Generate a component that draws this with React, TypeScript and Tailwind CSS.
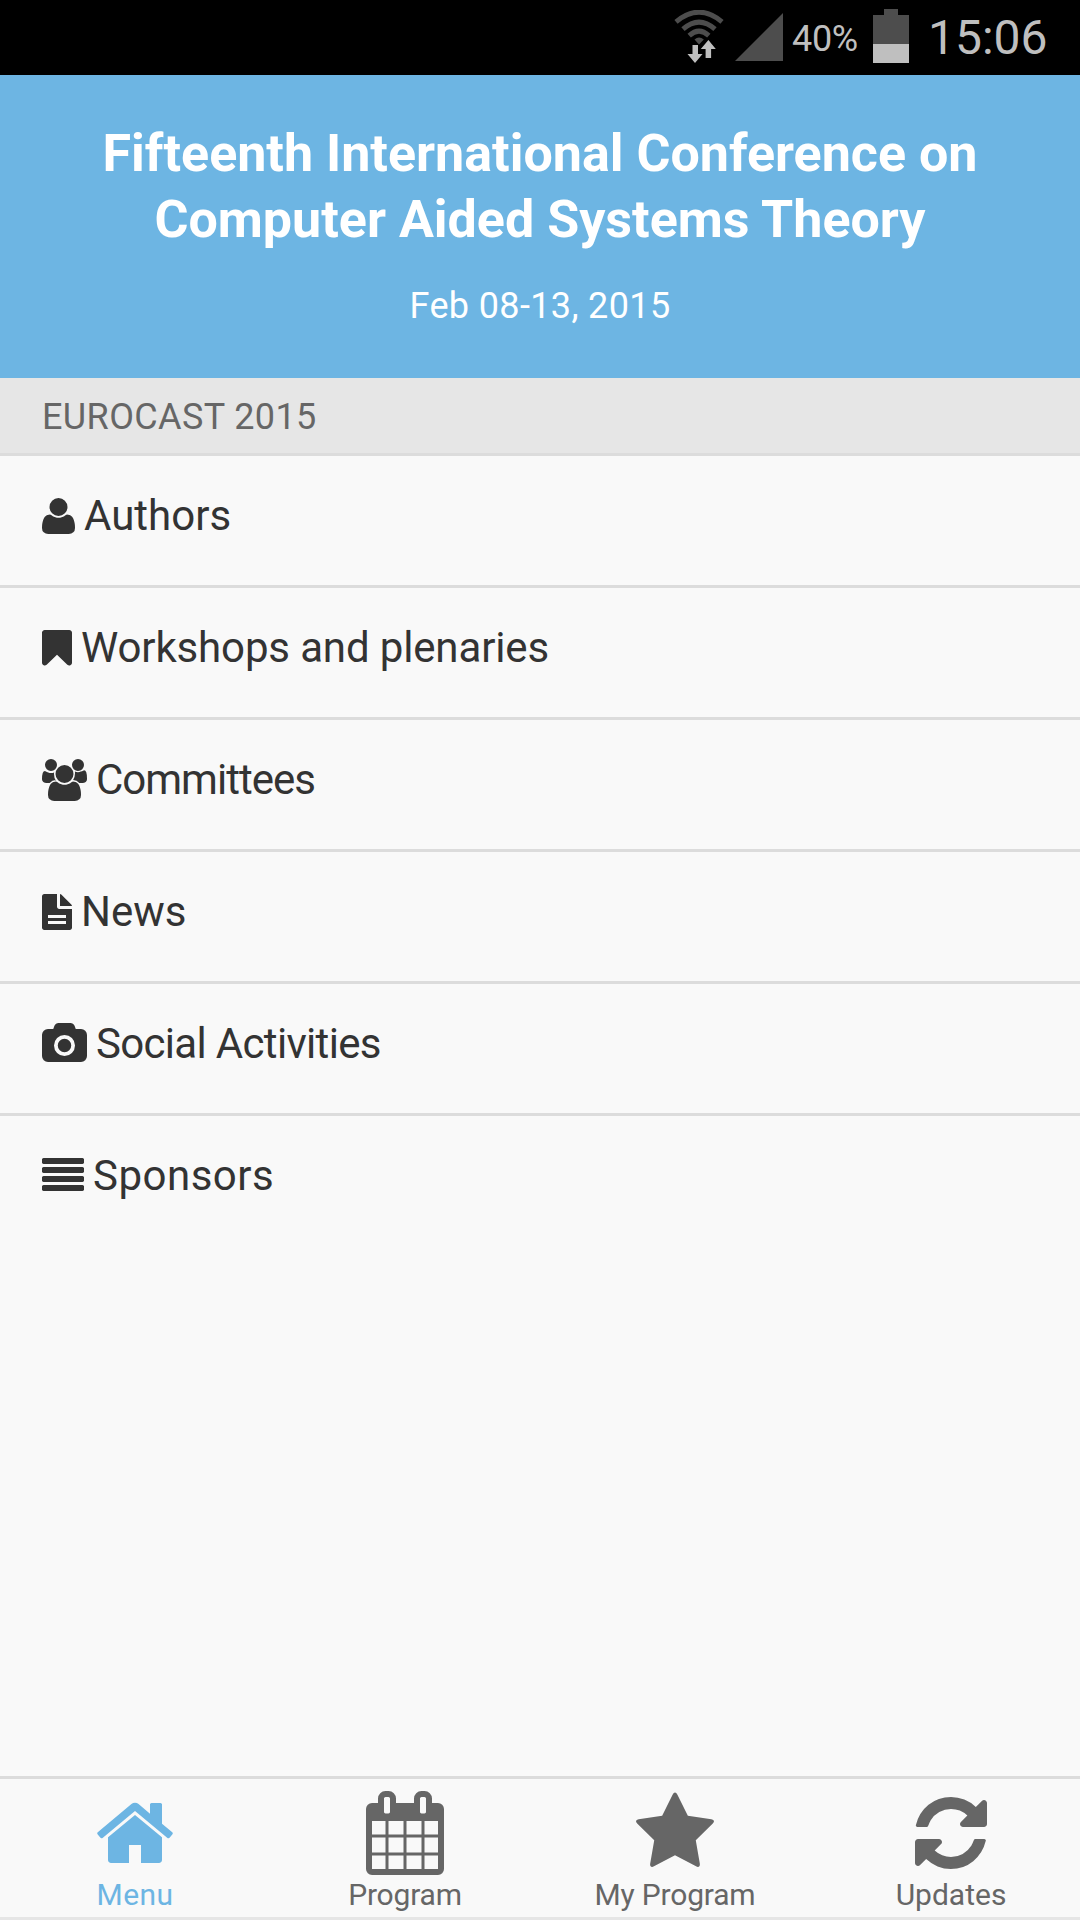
import { useState } from 'react';
import clsx from 'clsx';

type IconProps = {
  path: string;
  width: number;
  className?: string;
};

// Icon outlines are drawn on a 1792 unit em, y axis pointing up
const icons = {
  user: {
    width: 1408,
    path: "M1408 131q0 -120 -73 -189.5t-194 -69.5h-874q-121 0 -194 69.5t-73 189.5q0 53 3.5 103.5t14 109t26.5 108.5t43 97.5t62 81t85.5 53.5t111.5 20q9 0 42 -21.5t74.5 -48t108 -48t133.5 -21.5t133.5 21.5t108 48t74.5 48t42 21.5q61 0 111.5 -20t85.5 -53.5t62 -81t43 -97.5t26.5 -108.5t14 -109t3.5 -103.5zM1088 1024q0 -159 -112.5 -271.5t-271.5 -112.5t-271.5 112.5t-112.5 271.5t112.5 271.5t271.5 112.5t271.5 -112.5t112.5 -271.5z"
  },
  bookmark: {
    width: 1280,
    path: "M1164 1408q23 0 44 -9q33 -13 52.5 -41t19.5 -62v-1289q0 -34 -19.5 -62t-52.5 -41q-19 -8 -44 -8q-48 0 -83 32l-441 424l-441 -424q-36 -33 -83 -33q-23 0 -44 9q-33 13 -52.5 41t-19.5 62v1289q0 34 19.5 62t52.5 41q21 9 44 9h1048z"
  },
  group: {
    width: 1920,
    path: "M593 640q-162 -5 -265 -128h-134q-82 0 -138 40.5t-56 118.5q0 353 124 353q6 0 43.5 -21t97.5 -42.5t119 -21.5q67 0 133 23q-5 -37 -5 -66q0 -159 81 -293zM1664 3q0 -120 -73 -189.5t-194 -69.5h-874q-121 0 -194 69.5t-73 189.5q0 53 3.5 103.5t14 109t26.5 108.5t43 97.5t62 81t85.5 53.5t111.5 20q10 0 43 -21.5t73 -48t107 -48t135 -21.5t135 21.5t107 48t73 48t43 21.5q61 0 111.5 -20t85.5 -53.5t62 -81t43 -97.5t26.5 -108.5t14 -109t3.5 -103.5zM640 1280q0 -106 -75 -181t-181 -75t-181 75t-75 181t75 181t181 75t181 -75t75 -181zM1344 896q0 -159 -112.5 -271.5t-271.5 -112.5t-271.5 112.5t-112.5 271.5t112.5 271.5t271.5 112.5t271.5 -112.5t112.5 -271.5zM1920 671q0 -78 -56 -118.5t-138 -40.5h-134q-103 123 -265 128q81 134 81 293q0 29 -5 66q66 -23 133 -23q59 0 119 21.5t97.5 42.5t43.5 21q124 0 124 -353zM1792 1280q0 -106 -75 -181t-181 -75t-181 75t-75 181t75 181t181 75t181 -75t75 -181z"
  },
  file: {
    width: 1280,
    path: "M640 1408h-544q-40 0 -68 -28t-28 -68v-1344q0 -40 28 -68t68 -28h1088q40 0 68 28t28 68v800h-544q-40 0 -68 28t-28 68v544zM768 1408v-512h512q-8 32 -40 70l-376 380q-36 42 -96 62zM256 512h768v-128h-768v128zM256 256h768v-128h-768v128z"
  },
  camera: {
    width: 1920,
    path: "M960 864q119 0 203.5 -84.5t84.5 -203.5t-84.5 -203.5t-203.5 -84.5t-203.5 84.5t-84.5 203.5t84.5 203.5t203.5 84.5zM1664 1280q106 0 181 -75t75 -181v-896q0 -106 -75 -181t-181 -75h-1408q-106 0 -181 75t-75 181v896q0 106 75 181t181 75h224l51 136q19 49 69.5 84.5t103.5 35.5h512q53 0 103.5 -35.5t69.5 -84.5l51 -136h224zM960 128q185 0 316.5 131.5t131.5 316.5t-131.5 316.5t-316.5 131.5t-316.5 -131.5t-131.5 -316.5t131.5 -316.5t316.5 -131.5z"
  },
  justify: {
    width: 1792,
    path: "M1792 192v-128q0 -26 -19 -45t-45 -19h-1664q-26 0 -45 19t-19 45v128q0 26 19 45t45 19h1664q26 0 45 -19t19 -45zM1792 576v-128q0 -26 -19 -45t-45 -19h-1664q-26 0 -45 19t-19 45v128q0 26 19 45t45 19h1664q26 0 45 -19t19 -45zM1792 960v-128q0 -26 -19 -45t-45 -19h-1664q-26 0 -45 19t-19 45v128q0 26 19 45t45 19h1664q26 0 45 -19t19 -45zM1792 1344v-128q0 -26 -19 -45t-45 -19h-1664q-26 0 -45 19t-19 45v128q0 26 19 45t45 19h1664q26 0 45 -19t19 -45z"
  },
  home: {
    width: 1664,
    path: "M1408 544v-480q0 -26 -19 -45t-45 -19h-384v384h-256v-384h-384q-26 0 -45 19t-19 45v480q0 1 .5 3t.5 3l575 474l575 -474q1 -2 1 -6zM1631 613l-62 -74q-8 -9 -21 -11h-3q-13 0 -21 7l-692 577l-692 -577q-12 -8 -24 -7q-13 2 -21 11l-62 74q-8 10 -7 23.5t11 21.5l719 599q32 26 76 26t76 -26l244 -204v195q0 14 9 23t23 9h192q14 0 23 -9t9 -23v-408l219 -182q10 -8 11 -21.5t-7 -23.5z"
  },
  calendar: {
    width: 1664,
    path: "M128 -128h288v288h-288v-288zM480 -128h320v288h-320v-288zM128 224h288v320h-288v-320zM480 224h320v320h-320v-320zM128 608h288v288h-288v-288zM864 -128h320v288h-320v-288zM480 608h320v288h-320v-288zM1248 -128h288v288h-288v-288zM864 224h320v320h-320v-320zM512 1088v288q0 13 -9.5 22.5t-22.5 9.5h-64q-13 0 -22.5 -9.5t-9.5 -22.5v-288q0 -13 9.5 -22.5t22.5 -9.5h64q13 0 22.5 9.5t9.5 22.5zM1248 224h288v320h-288v-320zM864 608h320v288h-320v-288zM1248 608h288v288h-288v-288zM1280 1088v288q0 13 -9.5 22.5t-22.5 9.5h-64q-13 0 -22.5 -9.5t-9.5 -22.5v-288q0 -13 9.5 -22.5t22.5 -9.5h64q13 0 22.5 9.5t9.5 22.5zM1664 1152v-1280q0 -52 -38 -90t-90 -38h-1408q-52 0 -90 38t-38 90v1280q0 52 38 90t90 38h128v96q0 66 47 113t113 47h64q66 0 113 -47t47 -113v-96h384v96q0 66 47 113t113 47h64q66 0 113 -47t47 -113v-96h128q52 0 90 -38t38 -90z"
  },
  star: {
    width: 1664,
    path: "M1664 889q0 -22 -26 -48l-363 -354l86 -500q1 -7 1 -20q0 -21 -10.5 -35.5t-30.5 -14.5q-19 0 -40 12l-449 236l-449 -236q-22 -12 -40 -12q-21 0 -31.5 14.5t-10.5 35.5q0 6 2 20l86 500l-364 354q-25 27 -25 48q0 37 56 46l502 73l225 455q19 41 49 41t49 -41l225 -455l502 -73q56 -9 56 -46z"
  },
  refresh: {
    width: 1536,
    path: "M1511 480q0 -5 -1 -7q-64 -268 -268 -434.5t-478 -166.5q-146 0 -282.5 55t-243.5 157l-129 -129q-19 -19 -45 -19t-45 19t-19 45v448q0 26 19 45t45 19h448q26 0 45 -19t19 -45t-19 -45l-137 -137q71 -66 161 -102t187 -36q134 0 250 65t186 179q11 17 53 117q8 23 30 23h192q13 0 22.5 -9.5t9.5 -22.5zM1536 1280v-448q0 -26 -19 -45t-45 -19h-448q-26 0 -45 19t-19 45t19 45l138 138q-148 137 -349 137q-134 0 -250 -65t-186 -179q-11 -17 -53 -117q-8 -23 -30 -23h-199q-13 0 -22.5 9.5t-9.5 22.5v7q65 268 270 434.5t480 166.5q146 0 284 -55.5t245 -156.5l130 129q19 19 45 19t45 -19t19 -45z"
  }
};

function Icon({ path, width, className }: IconProps) {
  return (
    <svg
      viewBox={`0 -1536 ${width} 1792`}
      className={clsx("w-auto shrink-0 overflow-visible", className)}
      fill="currentColor"
      fillRule="evenodd"
      aria-hidden="true"
    >
      <path d={path} transform="scale(1 -1)" />
    </svg>
  );
}

function StatusBar() {
  return (
    <div className="flex h-[75px] items-start bg-black pl-[674px] text-[#bfbfbf]">
      <svg viewBox="0 0 50 54" className="mt-[10px] h-[54px] w-[50px] shrink-0" aria-hidden="true">
        <g fill="none" stroke="#4d4d4d" strokeWidth="5">
          <path d="M2 11.8Q25 -7.4 48 11.8" />
          <path d="M9 19.2Q25 5 41 19.2" />
          <path d="M15.2 25.6Q25 16.8 34.8 25.6" />
        </g>
        <path d="M20.5 29.5Q25 25.5 29.8 29.5L25 34.5Z" fill="#4d4d4d" />
        <path d="M18.5 35h5.5v9h4.5l-7.5 9-7.5-9h5z" fill="#bfbfbf" />
        <path d="M34.4 30l7.4 9h-4.7v9h-5.5v-9h-4.8z" fill="#bfbfbf" />
      </svg>
      <svg viewBox="0 0 48 48" className="mt-[13px] ml-[11px] h-12 w-12 shrink-0" aria-hidden="true">
        <path d="M0 48L48 0V48Z" fill="#4d4d4d" />
      </svg>
      <span className="mt-[18px] ml-[9px] w-[66px] text-[36px] leading-[42px] tracking-[-0.3px]">40%</span>
      <div className="mt-[9px] ml-[15px] flex w-9 flex-col items-center">
        <div className="h-[6px] w-[14px] bg-[#4d4d4d]" />
        <div className="h-[29px] w-9 bg-[#4d4d4d]" />
        <div className="h-[19px] w-9 bg-[#bfbfbf]" />
      </div>
      <span className="mt-[10px] ml-[19px] text-[48px] leading-[56px] whitespace-nowrap">15:06</span>
    </div>
  );
}

const menuItems = [
  { title: "Authors", icon: icons.user, tracking: "tracking-normal" },
  { title: "Workshops and plenaries", icon: icons.bookmark, tracking: "tracking-[-0.14px]" },
  { title: "Committees", icon: icons.group, tracking: "tracking-[-1px]" },
  { title: "News", icon: icons.file, tracking: "tracking-normal" },
  { title: "Social Activities", icon: icons.camera, tracking: "tracking-[-0.68px]" },
  { title: "Sponsors", icon: icons.justify, tracking: "tracking-[0.5px]" }
];

const tabs = [
  { title: "Menu", icon: icons.home, tracking: "tracking-[0.4px]" },
  { title: "Program", icon: icons.calendar, tracking: "tracking-[-0.2px]" },
  { title: "My Program", icon: icons.star, tracking: "tracking-[-0.2px]" },
  { title: "Updates", icon: icons.refresh, tracking: "tracking-normal" }
];

export default function App() {
  const [activeTab, setActiveTab] = useState("Menu");

  return (
    <div className="flex h-[1920px] w-[1080px] flex-col overflow-hidden bg-[#f9f9f9] font-['Roboto',sans-serif]">
      <StatusBar />

      <header className="flex h-[303px] flex-col items-center bg-[#6db5e3] pt-[46px] text-center text-white">
        <h1 className="text-[52px] leading-[66px] font-bold whitespace-nowrap">
          Fifteenth International Conference on
          <br />
          Computer Aided Systems Theory
        </h1>
        <p className="mt-[32px] text-[36px] leading-[42px] tracking-[0.36px]">Feb 08-13, 2015</p>
      </header>

      <div className="h-[78px] border-b-3 border-[#dcdcdc] bg-[#e6e6e6] pt-[18px] pl-[42px] text-[36px] leading-[42px] tracking-[0.38px] text-[#666666]">
        EUROCAST 2015
      </div>

      <ul className="flex-1 text-[#333333]">
        {menuItems.map((item) => (
          <li
            key={item.title}
            className="flex h-[132px] items-start border-b-3 border-[#dcdcdc] pl-[42px] last:border-b-0"
          >
            <Icon {...item.icon} className="mt-[39px] h-[42px]" />
            <span className={clsx("mt-[35px] ml-[9px] text-[42px] leading-[49px] whitespace-nowrap", item.tracking)}>
              {item.title}
            </span>
          </li>
        ))}
      </ul>

      <nav className="grid h-[144px] grid-cols-4 border-t-3 border-b-3 border-t-[#dcdcdc] border-b-[#e6e6e6]">
        {tabs.map((tab) => (
          <button
            key={tab.title}
            onClick={() => setActiveTab(tab.title)}
            className={clsx(
              "flex flex-col items-center pt-3 last:pl-3",
              activeTab === tab.title ? "text-[#6db5e3]" : "text-[#666666]"
            )}
          >
            <Icon {...tab.icon} className="h-[84px]" />
            <span className={clsx("mt-[2px] text-[30px] leading-[35px] whitespace-nowrap", tab.tracking)}>
              {tab.title}
            </span>
          </button>
        ))}
      </nav>
    </div>
  );
}
